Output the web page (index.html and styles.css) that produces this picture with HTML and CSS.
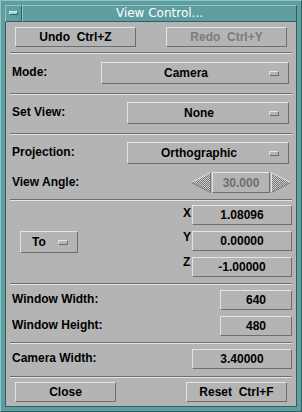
FILE: index.html
```html
<!DOCTYPE html>
<html lang="en">
<head>
  <meta charset="UTF-8">
  <title>View Control...</title>
  <link rel="stylesheet" href="styles.css">
</head>
<body>
  <div class="window">
    <div class="titlebar">
      <span class="menu-btn"><span class="menu-bar"></span></span>
      <span class="title">View Control...</span>
    </div>

    <div class="panel">
      <div class="btn-row">
        <button class="btn wide">Undo  Ctrl+Z</button>
        <button class="btn wide" disabled>Redo  Ctrl+Y</button>
      </div>
      <div class="sep s1"></div>

      <div class="row r-mode">
        <span class="label">Mode:</span>
        <div class="option opt-mode"><span class="option-text">Camera</span><span class="ind"></span></div>
      </div>
      <div class="sep s2"></div>

      <div class="row r-view">
        <span class="label">Set View:</span>
        <div class="option opt-short"><span class="option-text">None</span><span class="ind"></span></div>
      </div>
      <div class="sep s3"></div>

      <div class="row r-proj">
        <span class="label">Projection:</span>
        <div class="option opt-short"><span class="option-text">Orthographic</span><span class="ind"></span></div>
      </div>
      <div class="row r-angle">
        <span class="label">View Angle:</span>
        <div class="spinner">
          <svg class="arrow" width="20" height="21" viewBox="0 0 20 21">
            <defs>
              <pattern id="stipL" width="2" height="2" patternUnits="userSpaceOnUse">
                <rect width="2" height="2" fill="#cccccc"/>
                <rect width="1" height="1" fill="#787878"/>
                <rect x="1" y="1" width="1" height="1" fill="#787878"/>
              </pattern>
            </defs>
            <polygon points="0.5,10.5 19.5,0.5 19.5,20.5" fill="url(#stipL)"/>
            <line x1="0.5" y1="10.5" x2="19.5" y2="0.5" stroke="#e4e4e4"/>
            <line x1="0.5" y1="10.5" x2="19.5" y2="20.5" stroke="#7a7a7a"/>
            <line x1="19.5" y1="0.5" x2="19.5" y2="20.5" stroke="#7a7a7a"/>
          </svg>
          <span class="field angle">30.000</span>
          <svg class="arrow" width="20" height="21" viewBox="0 0 20 21">
            <defs>
              <pattern id="stipR" width="2" height="2" patternUnits="userSpaceOnUse">
                <rect width="2" height="2" fill="#cccccc"/>
                <rect width="1" height="1" fill="#787878"/>
                <rect x="1" y="1" width="1" height="1" fill="#787878"/>
              </pattern>
            </defs>
            <polygon points="19.5,10.5 0.5,0.5 0.5,20.5" fill="url(#stipR)"/>
            <line x1="0.5" y1="0.5" x2="19.5" y2="10.5" stroke="#e4e4e4"/>
            <line x1="0.5" y1="0.5" x2="0.5" y2="20.5" stroke="#e4e4e4"/>
            <line x1="0.5" y1="20.5" x2="19.5" y2="10.5" stroke="#7a7a7a"/>
          </svg>
        </div>
      </div>
      <div class="sep s4"></div>

      <div class="xyz">
        <div class="option opt-to"><span class="to-text">To</span><span class="ind"></span></div>
        <div class="coords">
          <div class="coord"><span class="axis ax-x">X</span><span class="field wide-field">1.08096</span></div>
          <div class="coord"><span class="axis ax-y">Y</span><span class="field wide-field">0.00000</span></div>
          <div class="coord"><span class="axis ax-z">Z</span><span class="field wide-field">-1.00000</span></div>
        </div>
      </div>
      <div class="sep s5"></div>

      <div class="row r-win">
        <span class="label">Window Width:</span>
        <span class="field short-field">640</span>
      </div>
      <div class="row r-win2">
        <span class="label">Window Height:</span>
        <span class="field short-field">480</span>
      </div>
      <div class="sep s6"></div>

      <div class="row r-cam">
        <span class="label">Camera Width:</span>
        <span class="field wide-field">3.40000</span>
      </div>
      <div class="sep s7"></div>

      <div class="btn-row bottom">
        <button class="btn small">Close</button>
        <button class="btn small">Reset  Ctrl+F</button>
      </div>
    </div>
  </div>
</body>
</html>
```

FILE: styles.css
```css
:root {
  --gray: #b4b4b4;
  --light: #e4e4e4;
  --dark: #6e6e6e;
  --teal: #5f9ea0;
  --teal-light: #8fc5c7;
  --teal-dark: #2f5f61;
}

* {
  box-sizing: border-box;
}

body {
  margin: 0;
  background: var(--teal);
  font-family: "Liberation Sans", Arial, sans-serif;
  font-size: 12px;
  font-weight: bold;
  color: #000;
}

.window {
  width: 302px;
  height: 412px;
  border: 1px solid;
  border-color: var(--teal-light) var(--teal-dark) var(--teal-dark) var(--teal-light);
  padding: 4px;
  display: flex;
  flex-direction: column;
}

/* title bar */

.titlebar {
  display: flex;
  height: 17px;
}

.menu-btn {
  width: 17px;
  height: 17px;
  border: 1px solid;
  border-color: var(--teal-light) var(--teal-dark) var(--teal-dark) var(--teal-light);
  padding: 5px 3px 0;
}

.menu-bar {
  display: block;
  width: 9px;
  height: 4px;
  background: #a9d2d3;
  border: 1px solid;
  border-color: #d8eeee var(--teal-dark) var(--teal-dark) #d8eeee;
}

.title {
  flex: 1;
  border: 1px solid;
  border-color: var(--teal-light) var(--teal-dark) var(--teal-dark) var(--teal-light);
  color: #fff;
  font-family: "DejaVu Sans", sans-serif;
  font-weight: normal;
  font-size: 12px;
  line-height: 15px;
  text-align: center;
}

/* panel */

.panel {
  flex: 1;
  background: var(--gray);
  border: 1px solid var(--teal-dark);
  border-top: 0;
  padding: 5px 4px 4px;
  display: flex;
  flex-direction: column;
}

.sep {
  height: 2px;
  border-top: 1px solid var(--dark);
  border-bottom: 1px solid var(--light);
}

.s1 { margin-top: 5px; }
.s2 { margin-top: 9px; }
.s3 { margin-top: 9px; }
.s4 { margin-top: 6px; }
.s5 { margin-top: 6px; }
.s6 { margin-top: 6px; }
.s7 { margin-top: 7px; }

.btn-row {
  display: flex;
  justify-content: space-between;
  padding: 0 5px;
}

.btn-row.bottom {
  margin-top: 4px;
}

.btn {
  height: 20px;
  padding: 0;
  background: var(--gray);
  border: 1px solid;
  border-color: var(--light) var(--dark) var(--dark) var(--light);
  border-radius: 0;
  font: inherit;
  color: #000;
  white-space: pre;
}

.btn:disabled {
  color: #7c7c7c;
}

.btn.wide { width: 121px; }
.btn.small { width: 101px; }

.row {
  display: flex;
  align-items: center;
  justify-content: space-between;
  padding-left: 2px;
}

.label {
  margin-top: -3px;
}

.r-mode { margin-top: 8px; }
.r-view { margin-top: 7px; }
.r-proj { margin-top: 7px; }
.r-angle { margin-top: 8px; }
.r-win { margin-top: 5px; }
.r-win2 { margin-top: 6px; }
.r-cam { margin-top: 5px; }

.r-angle .label,
.r-win .label,
.r-win2 .label,
.r-cam .label {
  margin-top: -2px;
}

/* option menus */

.option {
  display: flex;
  align-items: center;
  height: 22px;
  border: 1px solid;
  border-color: var(--light) var(--dark) var(--dark) var(--light);
}

.opt-mode {
  width: 188px;
  margin-right: 3px;
}

.opt-short {
  width: 162px;
  margin-right: 3px;
}

.option-text {
  flex: 1;
  text-align: center;
  padding-left: 1px;
}

.ind {
  width: 10px;
  height: 5px;
  margin-right: 9px;
  border: 1px solid;
  border-color: var(--light) var(--dark) var(--dark) var(--light);
}

/* spinner */

.spinner {
  display: flex;
  align-items: center;
  gap: 1px;
  margin-right: 1px;
}

.arrow {
  display: block;
}

.field {
  display: flex;
  align-items: center;
  justify-content: center;
  height: 20px;
  border: 1px solid;
  border-color: var(--light) var(--dark) var(--dark) var(--light);
}

.field.angle {
  width: 58px;
  height: 21px;
  color: #6e6e6e;
}

.wide-field { width: 100px; }
.short-field { width: 72px; }

/* coordinates */

.xyz {
  display: flex;
  justify-content: space-between;
  margin-top: 4px;
}

.opt-to {
  width: 58px;
  margin: 26px 0 0 10px;
}

.to-text {
  flex: 1;
  padding-left: 11px;
}

.coords {
  display: flex;
  flex-direction: column;
  gap: 6px;
}

.coord {
  display: flex;
  align-items: flex-start;
}

.axis {
  width: 9px;
  line-height: 12px;
  margin-top: 2px;
}

.ax-y { margin-top: 0; }
.ax-z { margin-top: -1px; }
```
